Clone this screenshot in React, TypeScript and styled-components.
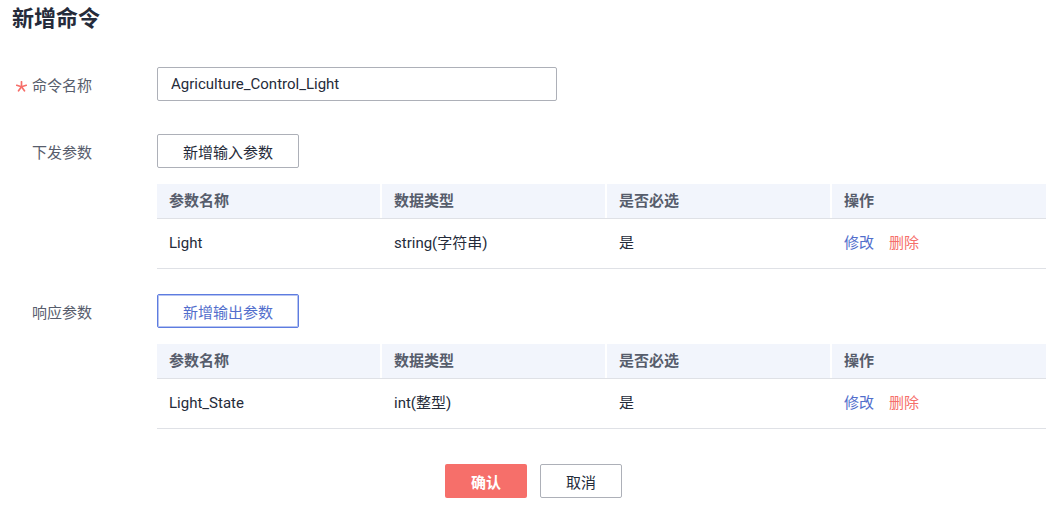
import React from "react";
import styled, { createGlobalStyle } from "styled-components";

const GlobalStyle = createGlobalStyle`
  html, body {
    margin: 0;
    padding: 0;
    background: #ffffff;
    overflow: hidden;
  }
  body {
    font-family: Roboto, "Noto Sans CJK SC", sans-serif;
    font-size: 15px;
    color: #252b3a;
  }
  * { box-sizing: border-box; }
`;

const Page = styled.div`
  width: 1046px;
  padding-top: 3px;
`;

const Title = styled.h1`
  margin: 0 0 32px 0;
  padding-left: 12px;
  font-size: 22px;
  line-height: 32px;
  font-weight: 700;
  color: #252b3a;
`;

const FormItem = styled.div<{ $mb: number }>`
  display: flex;
  align-items: flex-start;
  margin-bottom: ${(p) => p.$mb}px;
`;

const Label = styled.div`
  width: 157px;
  flex: none;
  display: flex;
  align-items: center;
  padding-left: 16px;
  padding-top: 3px;
  height: 34px;
  line-height: 34px;
  color: #575d6c;
  font-size: 15px;
`;

const StarSlot = styled.span<{ $hidden?: boolean }>`
  width: 16px;
  flex: none;
  display: flex;
  align-items: center;
  padding-top: 1px;
  visibility: ${(p) => (p.$hidden ? "hidden" : "visible")};
`;

const Content = styled.div`
  flex: 1;
  min-width: 0;
  display: flex;
  flex-direction: column;
  align-items: flex-start;
`;

const Input = styled.input`
  width: 400px;
  height: 34px;
  border: 1px solid #adb0b8;
  border-radius: 2px;
  padding: 0 13px;
  font-family: Roboto, "Noto Sans CJK SC", sans-serif;
  font-size: 15px;
  color: #252b3a;
  outline: none;
  background: #fff;
`;

const OutlineButton = styled.button<{ $active?: boolean }>`
  height: 34px;
  padding: 0 25px;
  border: 1px solid ${(p) => (p.$active ? "#5e7ce0" : "#adb0b8")};
  box-shadow: ${(p) => (p.$active ? "inset 0 0 0 1px rgba(94,124,224,0.45)" : "none")};
  border-radius: 2px;
  background: #fff;
  color: ${(p) => (p.$active ? "#526ecc" : "#252b3a")};
  font-family: Roboto, "Noto Sans CJK SC", sans-serif;
  font-size: 15px;
  cursor: pointer;
`;

const Table = styled.div`
  margin-top: 16px;
  width: 100%;
`;

const HeaderRow = styled.div`
  display: grid;
  grid-template-columns: 223px 223px 223px 1fr;
  column-gap: 2px;
  border-bottom: 1px solid #dfe1e6;
`;

const HeaderCell = styled.div`
  height: 34px;
  line-height: 34px;
  padding-left: 12px;
  background: #f2f5fc;
  color: #575d6c;
  font-weight: 700;
  font-size: 15px;
`;

const BodyRow = styled.div`
  display: grid;
  grid-template-columns: 223px 223px 223px 1fr;
  column-gap: 2px;
  border-bottom: 1px solid #dfe1e6;
`;

const BodyCell = styled.div`
  height: 49px;
  line-height: 49px;
  padding-left: 12px;
  color: #252b3a;
  font-size: 15px;
  display: flex;
  gap: 15px;
`;

const Link = styled.span<{ $danger?: boolean }>`
  color: ${(p) => (p.$danger ? "#f66f6a" : "#526ecc")};
  cursor: pointer;
`;

const Actions = styled.div`
  display: flex;
  gap: 13px;
  padding-left: 445px;
`;

const PrimaryButton = styled.button`
  width: 82px;
  height: 34px;
  border: none;
  border-radius: 2px;
  background: #f66f6a;
  color: #fff;
  font-family: Roboto, "Noto Sans CJK SC", sans-serif;
  font-size: 15px;
  font-weight: 700;
`;

const CancelButton = styled.button`
  width: 82px;
  height: 34px;
  border: 1px solid #adb0b8;
  border-radius: 2px;
  background: #fff;
  color: #252b3a;
  font-family: Roboto, "Noto Sans CJK SC", sans-serif;
  font-size: 15px;
`;

function RequiredStar({ hidden }: { hidden?: boolean }) {
  const arms = [-90, -18, 54, 126, 198];
  return (
    <StarSlot $hidden={hidden}>
      <svg width="11" height="11" viewBox="0 0 11 11">
        {arms.map((a) => {
          const r = (a * Math.PI) / 180;
          return (
            <line
              key={a}
              x1="5.5"
              y1="5.8"
              x2={5.5 + Math.cos(r) * 5}
              y2={5.8 + Math.sin(r) * 5}
              stroke="#f66f6a"
              strokeWidth="1.7"
              strokeLinecap="round"
            />
          );
        })}
      </svg>
    </StarSlot>
  );
}

type Param = { name: string; type: string; required: string };

const headers = ["参数名称", "数据类型", "是否必选", "操作"];

function ParamTable({ rows }: { rows: Param[] }) {
  return (
    <Table>
      <HeaderRow>
        {headers.map((h) => (
          <HeaderCell key={h}>{h}</HeaderCell>
        ))}
      </HeaderRow>
      {rows.map((r) => (
        <BodyRow key={r.name}>
          <BodyCell>{r.name}</BodyCell>
          <BodyCell>{r.type}</BodyCell>
          <BodyCell>{r.required}</BodyCell>
          <BodyCell>
            <Link>修改</Link>
            <Link $danger>删除</Link>
          </BodyCell>
        </BodyRow>
      ))}
    </Table>
  );
}

export default function App() {
  return (
    <>
      <GlobalStyle />
      <Page>
        <Title>新增命令</Title>
        <FormItem $mb={33}>
          <Label>
            <RequiredStar />
            命令名称
          </Label>
          <Content>
            <Input defaultValue="Agriculture_Control_Light" />
          </Content>
        </FormItem>
        <FormItem $mb={25}>
          <Label>
            <RequiredStar hidden />
            下发参数
          </Label>
          <Content>
            <OutlineButton>新增输入参数</OutlineButton>
            <ParamTable rows={[{ name: "Light", type: "string(字符串)", required: "是" }]} />
          </Content>
        </FormItem>
        <FormItem $mb={35}>
          <Label>
            <RequiredStar hidden />
            响应参数
          </Label>
          <Content>
            <OutlineButton $active>新增输出参数</OutlineButton>
            <ParamTable rows={[{ name: "Light_State", type: "int(整型)", required: "是" }]} />
          </Content>
        </FormItem>
        <Actions>
          <PrimaryButton>确认</PrimaryButton>
          <CancelButton>取消</CancelButton>
        </Actions>
      </Page>
    </>
  );
}
